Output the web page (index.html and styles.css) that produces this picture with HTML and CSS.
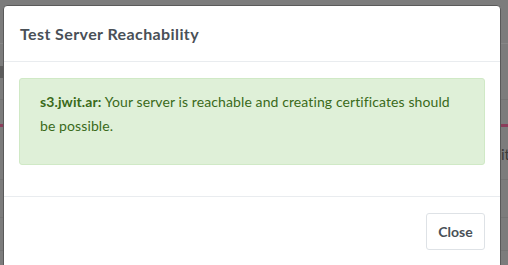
FILE: index.html
```html
<!DOCTYPE html>
<html>
  <head>
    <meta charset="utf-8">
    <title>Test Server Reachability</title>
    <link rel="stylesheet" href="styles.css">
  </head>
  <body>
    <div class="page">
      <div class="row r1"></div>
      <div class="row r2"><span class="handle"></span></div>
      <div class="row r3"></div>
      <div class="row pink"></div>
      <div class="row r4"><span class="cell">it</span></div>
      <div class="row r5"></div>
      <div class="row r6"></div>
      <div class="row r7"><span class="cell">2</span></div>
    </div>

    <div class="modal">
      <div class="modal-header">
        <h5 class="modal-title">Test Server Reachability</h5>
      </div>
      <div class="modal-body">
        <div class="alert alert-success">
          <strong>s3.jwit.ar:</strong> Your server is reachable and creating certificates should be possible.
        </div>
      </div>
      <div class="modal-footer">
        <button class="btn">Close</button>
      </div>
    </div>
  </body>
</html>
```

FILE: styles.css
```css
body,div,h5,p,button {margin:0;padding:0}

body {
  background-color: #7c7c7c;
  font-family: 'Lato', 'Noto Sans', sans-serif;
  font-size: 15px;
  overflow: hidden;
}

/* page behind the backdrop */
.page {
  height: 265px;
}

.row {
  border-bottom: 1px solid #868686;
  position: relative;
}

.r1 { height: 43px; }
.r2 { height: 55px; border-bottom-color: #747474; }
.r3 { height: 24px; border-bottom: none; }
.pink { height: 3px; background-color: #8b3d5b; border-bottom: none; }
.r4 { height: 52px; border-bottom-color: #747474; }
.r5 { height: 37px; border-bottom-color: #747474; }
.r6 { height: 32px; border-bottom-color: #747474; }
.r7 { height: 40px; border-bottom: none; }

.handle {
  position: absolute;
  left: 0;
  top: 22px;
  width: 3px;
  height: 12px;
  background-color: #5c5c5c;
}

.cell {
  position: absolute;
  left: 501px;
  bottom: 2px;
  color: #3a3a3a;
  font-size: 15px;
}

.r4 .cell { bottom: 16px; }

/* modal */
.modal {
  position: absolute;
  left: 3px;
  top: 5px;
  width: 496px;
  height: 280px;
  background-color: #fff;
  border: 1px solid #5a5a5a;
  border-radius: 4px;
  color: #212529;
}

.modal-header {
  padding: 16px 16px 0 16px;
  height: 39px;
  border-bottom: 1px solid #e9ecef;
}

.modal-title {
  font-size: 16px;
  font-weight: bold;
  letter-spacing: 0.4px;
  line-height: 24px;
  color: #495057;
}

.modal-body {
  padding: 16px 15px 31px 15px;
  border-bottom: 1px solid #e9ecef;
}

.alert {
  background-color: #dff0d8;
  border: 1px solid #d0e9c6;
  border-radius: 3px;
  color: #3a6a1a;
  font-size: 14px;
  letter-spacing: 0.1px;
  line-height: 24px;
  padding: 11px 20px 26px 20px;
}

.modal-footer {
  display: flex;
  justify-content: flex-end;
  padding: 16px 15px;
}

.btn {
  font-family: inherit;
  font-size: 14px;
  font-weight: bold;
  color: #495057;
  background-color: #fff;
  border: 1px solid #dee2e6;
  border-radius: 3px;
  width: 59px;
  height: 37px;
}
```
